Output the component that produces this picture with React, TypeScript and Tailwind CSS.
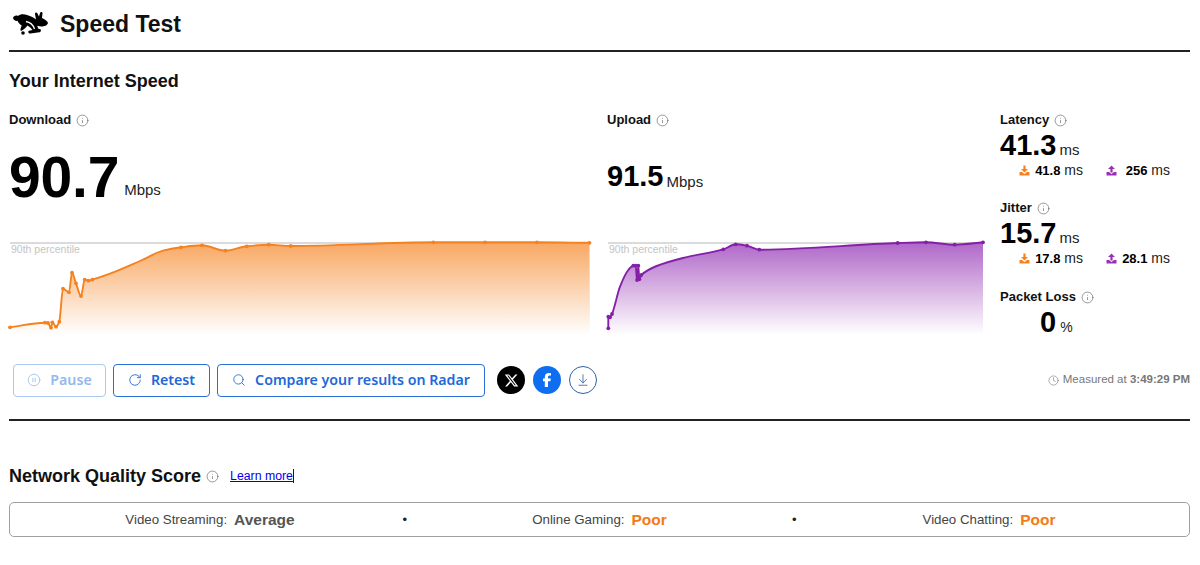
import React from "react";
import { Info, CirclePause, RotateCw, Search, ArrowDownToLine, Clock } from "lucide-react";
import { FaXTwitter, FaFacebookF } from "react-icons/fa6";

type P = [number, number];

const orange: P[] = [[10,327.3],[45,322.7],[48,323],[51,327.7],[52.3,322.3],[56,326.7],[59.3,321.7],[63,288.7],[69,292.3],[72,272.7],[76,283.3],[81,296],[84.7,279.7],[88.3,280.7],[92.3,279.7],[110,273.7],[140,261],[163,250.7],[181,247.3],[202,245.3],[225.3,250.7],[246.7,246.3],[268.7,244.7],[290.7,246],[433.3,242.3],[485,242.3],[537,242.3],[589.5,242.8]];
const purple: P[] = [[608.3,328.3],[608.3,316.7],[610,317.3],[612,314],[620,286.7],[628.3,270],[633.3,265.7],[635.7,265.7],[637,280],[638.3,265.7],[639.3,279.3],[641.3,275],[656.7,266],[683,258],[723.3,249.3],[735.7,244.3],[747,245.7],[759.3,249.7],[897.7,243],[926,242.3],[954.7,244.7],[983,242.3]];
const orangeDots = [0,1,2,3,4,5,6,7,8,9,10,11,12,13,14,18,19,20,21,22,23,24,25,26,27];
const purpleDots = [0,1,2,3,6,7,8,9,10,11,14,15,16,17,18,19,20,21];

function smooth(pts: P[]) {
  const s: number[] = [];
  for (let i = 0; i < pts.length - 1; i++) {
    const dx = pts[i + 1][0] - pts[i][0];
    s.push(dx === 0 ? 0 : (pts[i + 1][1] - pts[i][1]) / dx);
  }
  const m = pts.map((_, i) => {
    if (i === 0) return s[0];
    if (i === pts.length - 1) return s[i - 1];
    if (s[i - 1] * s[i] <= 0) return 0;
    return (2 * s[i - 1] * s[i]) / (s[i - 1] + s[i]);
  });
  let d = `M${pts[0][0]} ${pts[0][1]}`;
  for (let i = 0; i < pts.length - 1; i++) {
    const h = (pts[i + 1][0] - pts[i][0]) / 3;
    d += ` C${pts[i][0] + h} ${pts[i][1] + m[i] * h} ${pts[i + 1][0] - h} ${pts[i + 1][1] - m[i + 1] * h} ${pts[i + 1][0]} ${pts[i + 1][1]}`;
  }
  return d;
}

function Chart({ pts, dots, id, top, line, viewBox, x0, x1, opacity }: { pts: P[]; dots: number[]; id: string; top: string; line: string; viewBox: string; x0: number; x1: number; opacity: number }) {
  const d = smooth(pts);
  return (
    <div className="relative h-[100px]">
      <svg className="block overflow-visible" width="100%" height="100" viewBox={viewBox}>
        <defs>
          <linearGradient id={id} x1="0" y1="0" x2="0" y2="1">
            <stop offset="0" stopColor={top} stopOpacity={opacity} />
            <stop offset="1" stopColor={top} stopOpacity="0" />
          </linearGradient>
        </defs>
        <line x1={x0} x2={x1} y1="243" y2="243" stroke="#cfcfcf" strokeWidth="1.6" />
        <path d={`${d} L${x1} 335 L${x0} 335 Z`} fill={`url(#${id})`} />
        <path d={d} fill="none" stroke={line} strokeWidth="1.9" strokeLinejoin="round" />
        {dots.map((i) => (
          <circle key={i} cx={pts[i][0]} cy={pts[i][1]} r="1.9" fill={line} />
        ))}
      </svg>
      <span className="absolute left-[2px] top-[8px] text-[10.5px] leading-3 text-[#c4c4c4]">90th percentile</span>
    </div>
  );
}

function Label({ children }: { children: React.ReactNode }) {
  return (
    <div className="flex items-center gap-[5px] text-[13px] leading-4 font-bold text-[#111]">
      {children}
      <Info size={13} strokeWidth={1.1} className="text-[#555]" />
    </div>
  );
}

function Arrow({ up }: { up?: boolean }) {
  return (
    <svg width="11" height="11" viewBox="0 0 11 11" className={up ? "text-[#9b30b8]" : "text-[#f6821f]"}>
      <path d={up ? "M5.5 0.5 L9 4 H6.6 V7.5 H4.4 V4 H2 Z" : "M4.4 0.5 H6.6 V4 H9 L5.5 7.5 L2 4 H4.4 Z"} fill="currentColor" />
      <path d="M0.5 7 H3 L5.5 9 L8 7 H10.5 V10.5 H0.5 Z" fill="currentColor" />
    </svg>
  );
}

function Sub({ up, value }: { up?: boolean; value: string }) {
  return (
    <div className="flex w-[64px] items-center justify-between">
      <Arrow up={up} />
      <span className="text-[14px] text-[#222]">
        <b className="text-[13px] text-black">{value}</b> ms
      </span>
    </div>
  );
}

function Metric({ label, value, a, b, mt }: { label: string; value: string; a: string; b: string; mt: string }) {
  return (
    <div className={mt}>
      <Label>{label}</Label>
      <div className="mt-[1px] flex h-[32px] items-center">
        <span className="text-[29px] leading-8 font-bold text-black">{value}</span>
        <span className="mt-[10px] ml-[3px] text-[15px] text-[#222]">ms</span>
      </div>
      <div className="ml-[19px] flex h-[18px] items-center gap-[23px]">
        <Sub value={a} />
        <Sub up value={b} />
      </div>
    </div>
  );
}

function Btn({ children, w, faded }: { children: React.ReactNode; w: string; faded?: boolean }) {
  return (
    <button
      className={`flex h-[33px] items-center justify-center gap-[9px] rounded-[4px] border bg-white text-[14.2px] font-semibold ${w} ${
        faded ? "border-[#a9c8f2] text-[#93b9ee]" : "border-[#2a6fd6] text-[#2268d8]"
      }`}
      style={{ fontFamily: '"Noto Sans", sans-serif' }}
    >
      {children}
    </button>
  );
}

function Score({ label, value, tone }: { label: string; value: string; tone: string }) {
  return (
    <div className="flex w-[300px] items-center justify-center gap-[7px]">
      <span className="text-[13.3px] text-[#444]">{label}</span>
      <span className={`text-[15.5px] font-bold ${tone}`}>{value}</span>
    </div>
  );
}

export default function App() {
  return (
    <div className="h-[565px] w-[1200px] overflow-hidden bg-white pr-[10px] pl-[9px] text-black" style={{ fontFamily: '"Liberation Sans", Arial, sans-serif' }}>
      <header className="flex h-[50px] items-center pl-[4px]">
        <svg width="35" height="24" viewBox="0 0 35 24" className="mb-[4px] shrink-0">
          <path d="M0 7 C0.5 5 3 4 5 5 C7 3 11 3 14 4 C18 5 21 7 23 8.5 L22 3 C22 1 24 1 24.7 3 L26 5.5 L27 2 C27.5 0.3 30 0.8 29.5 2.5 L29 7 C31.5 8 34.5 10 35 12 C34.5 14.5 31 15.5 28.5 15.5 C27 15.5 25.5 15.2 24.2 14.7 C24.5 16 25 17 25.5 17.8 L27.3 18.3 C28.5 18.8 28 21.3 26.3 21.3 L17.5 22.5 C15.5 23 14.5 20.3 16 19.8 L19.5 19 C18.5 17.5 17 16 14.5 14.5 C13 16.5 11 18.5 8 20 C6.8 19 8 16 8.7 14.5 C6.7 13.5 5 11.5 4.5 9.8 C2.5 10.2 0.5 9 0 7 Z" fill="#000" />
          <path d="M13 10.5 C16 11 20 13.5 21.5 18" fill="none" stroke="#fff" strokeWidth="1.3" />
          <circle cx="10" cy="22" r="1.8" fill="#000" />
        </svg>
        <h1 className="mb-[2px] ml-[12px] text-[23px] leading-7 font-bold text-[#111]">Speed Test</h1>
      </header>
      <div className="h-[2px] bg-[#222]" />

      <h2 className="mt-[18px] text-[18px] leading-[22px] font-bold text-[#111]">Your Internet Speed</h2>

      <section className="mt-[20px] flex">
        <div className="w-[598px] shrink-0">
          <Label>Download</Label>
          <div className="mt-[17px] flex h-[64px] items-center">
            <span className="text-[57px] leading-[64px] font-bold tracking-[-0.2px] text-black">90.7</span>
            <span className="mt-[26px] ml-[5px] text-[15px] text-[#222]">Mbps</span>
          </div>
          <div className="mt-[26px] w-[582px]">
            <Chart pts={orange} dots={orangeDots} id="go" top="#f6821f" line="#f58220" viewBox="9 235 582 100" x0={10} x1={590} opacity={0.7} />
          </div>
        </div>
        <div className="w-[393px] shrink-0">
          <Label>Upload</Label>
          <div className="mt-[28px] flex h-[40px] items-center">
            <span className="text-[29px] leading-10 font-bold text-black">91.5</span>
            <span className="mt-[12px] ml-[3px] text-[15px] text-[#222]">Mbps</span>
          </div>
          <div className="mt-[39px] w-[378px]">
            <Chart pts={purple} dots={purpleDots} id="gp" top="#8a1fae" line="#8420a8" viewBox="607 235 378 100" x0={608} x1={983} opacity={0.68} />
          </div>
        </div>
        <div className="flex-1">
          <Metric label="Latency" value="41.3" a="41.8" b="256" mt="" />
          <Metric label="Jitter" value="15.7" a="17.8" b="28.1" mt="mt-[21px]" />
          <div className="mt-[22px]">
            <Label>Packet Loss</Label>
            <div className="mt-[1px] flex h-[32px] items-center pl-[40px]">
              <span className="text-[29px] leading-8 font-bold text-black">0</span>
              <span className="mt-[10px] ml-[4px] text-[14px] text-[#222]">%</span>
            </div>
          </div>
        </div>
      </section>

      <section className="mt-[25px] flex h-[34px] items-center pl-[4px]">
        <Btn w="w-[93px]" faded>
          <CirclePause size={14} strokeWidth={1.3} /> Pause
        </Btn>
        <div className="ml-[7px]">
          <Btn w="w-[97px]">
            <RotateCw size={14} strokeWidth={1.5} /> Retest
          </Btn>
        </div>
        <div className="ml-[7px]">
          <Btn w="w-[268px]">
            <Search size={14} strokeWidth={1.5} /> Compare your results on Radar
          </Btn>
        </div>
        <span className="ml-[12px] flex h-[28px] w-[28px] items-center justify-center rounded-full bg-black text-white">
          <FaXTwitter size={15} />
        </span>
        <span className="ml-[8px] flex h-[28px] w-[28px] items-center justify-center rounded-full bg-[#0f6ef0] text-white">
          <FaFacebookF size={14} />
        </span>
        <span className="ml-[8px] flex h-[28px] w-[28px] items-center justify-center rounded-full border border-[#2f5fa8] text-[#2f5fa8]">
          <ArrowDownToLine size={14} strokeWidth={1.4} />
        </span>
        <div className="ml-auto flex items-center gap-[4px] text-[11.5px] text-[#777]">
          <Clock size={11} strokeWidth={1.3} />
          <span>
            Measured at <b className="font-bold">3:49:29 PM</b>
          </span>
        </div>
      </section>

      <div className="mt-[22px] h-[2px] bg-[#222]" />

      <div className="mt-[44px] flex h-[22px] items-center">
        <h2 className="text-[18px] leading-[22px] font-bold text-[#111]">Network Quality Score</h2>
        <Info size={13} strokeWidth={1.1} className="ml-[5px] text-[#555]" />
        <a href="#" className="ml-[11px] border-r border-[#0000ee] text-[12.3px] leading-[14px] text-[#0000ee] underline">Learn more</a>
      </div>

      <div className="mt-[15px] flex h-[35px] items-center justify-between rounded-[5px] border border-[#a0a0a0] px-[50px]">
        <Score label="Video Streaming:" value="Average" tone="text-[#555]" />
        <span className="text-[13px] text-[#222]">•</span>
        <Score label="Online Gaming:" value="Poor" tone="text-[#f47a12]" />
        <span className="text-[13px] text-[#222]">•</span>
        <Score label="Video Chatting:" value="Poor" tone="text-[#f47a12]" />
      </div>
    </div>
  );
}
